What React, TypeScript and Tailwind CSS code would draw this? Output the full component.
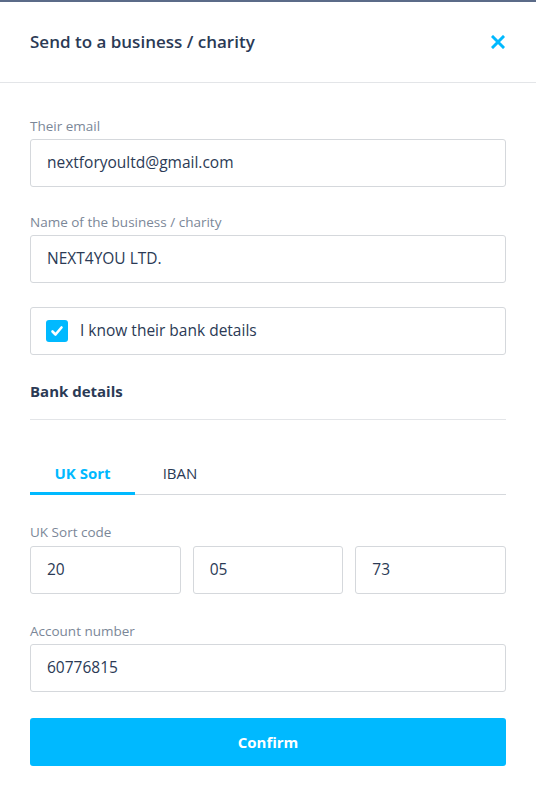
import { useState } from "react";

const Field = ({ label, value }: { label: string; value: string }) => (
  <div className="flex flex-col">
    <label className="text-[13.5px] leading-4 text-[#7b8798] mb-[5px]">{label}</label>
    <div className="h-12 border border-[#d5d8dc] rounded-[3px] flex items-center px-4 text-[15.5px] text-[#2b3a55]">
      {value}
    </div>
  </div>
);

const App = () => {
  const [tab, setTab] = useState("uk");

  return (
    <main
      className="w-[536px] h-[797px] bg-white border-t-2 border-[#5b6b88] overflow-hidden"
      style={{ fontFamily: "'Open Sans', 'Noto Sans', sans-serif" }}
    >
      <header className="h-[81px] px-[30px] flex items-center justify-between border-b border-[#e3e5e8]">
        <h1 className="text-[17px] font-semibold text-[#2b3a55]">Send to a business / charity</h1>
        <button className="text-[#00b9ff] mr-[1px]">
          <svg width="14" height="14" viewBox="0 0 14 14">
            <path d="M2 2 L12 12 M12 2 L2 12" stroke="currentColor" strokeWidth="3" strokeLinecap="square" />
          </svg>
        </button>
      </header>

      <section className="px-[30px] pt-[35px] flex flex-col">
        <Field label="Their email" value="nextforyoultd@gmail.com" />
        <div className="mt-[27px]">
          <Field label="Name of the business / charity" value="NEXT4YOU LTD." />
        </div>

        <div className="mt-[24px] h-12 border border-[#d5d8dc] rounded-[3px] flex items-center px-[15px] gap-3">
          <span className="w-[22px] h-[22px] rounded-[3px] bg-[#00b9ff] flex items-center justify-center">
            <svg width="14" height="14" viewBox="0 0 14 14">
              <path d="M2.5 7.5 L5.5 10.5 L11.5 3.5" fill="none" stroke="white" strokeWidth="2.6" strokeLinecap="round" strokeLinejoin="round" />
            </svg>
          </span>
          <span className="text-[15.5px] text-[#2b3a55]">I know their bank details</span>
        </div>

        <h2 className="mt-[25px] text-[15px] leading-[22px] font-bold text-[#2b3a55]">Bank details</h2>
        <div className="mt-[17px] border-b border-[#e3e5e8]" />

        <div className="mt-[42px] flex border-b border-[#d5d8dc]">
          <button
            onClick={() => setTab("uk")}
            className={`w-[105px] pb-[8px] text-[15px] leading-[22px] font-bold -mb-px border-b-[3px] ${
              tab === "uk" ? "text-[#00b9ff] border-[#00b9ff]" : "text-[#2b3a55] border-transparent"
            }`}
          >
            UK Sort
          </button>
          <button
            onClick={() => setTab("iban")}
            className={`w-[90px] pb-[8px] text-[15px] leading-[22px] -mb-px border-b-[3px] ${
              tab === "iban" ? "text-[#00b9ff] border-[#00b9ff] font-bold" : "text-[#2b3a55] border-transparent"
            }`}
          >
            IBAN
          </button>
        </div>

        <div className="mt-[29px] flex flex-col">
          <label className="text-[13.5px] leading-4 text-[#7b8798] mb-[6px]">UK Sort code</label>
          <div className="grid grid-cols-3 gap-3">
            {["20", "05", "73"].map((v) => (
              <div key={v} className="h-12 border border-[#d5d8dc] rounded-[3px] flex items-center px-4 text-[15.5px] text-[#2b3a55]">
                {v}
              </div>
            ))}
          </div>
        </div>

        <div className="mt-[29px]">
          <Field label="Account number" value="60776815" />
        </div>

        <button className="mt-[26px] h-12 rounded-[3px] bg-[#00b9ff] text-white text-[15px] font-bold">Confirm</button>
      </section>
    </main>
  );
};

export default App;
